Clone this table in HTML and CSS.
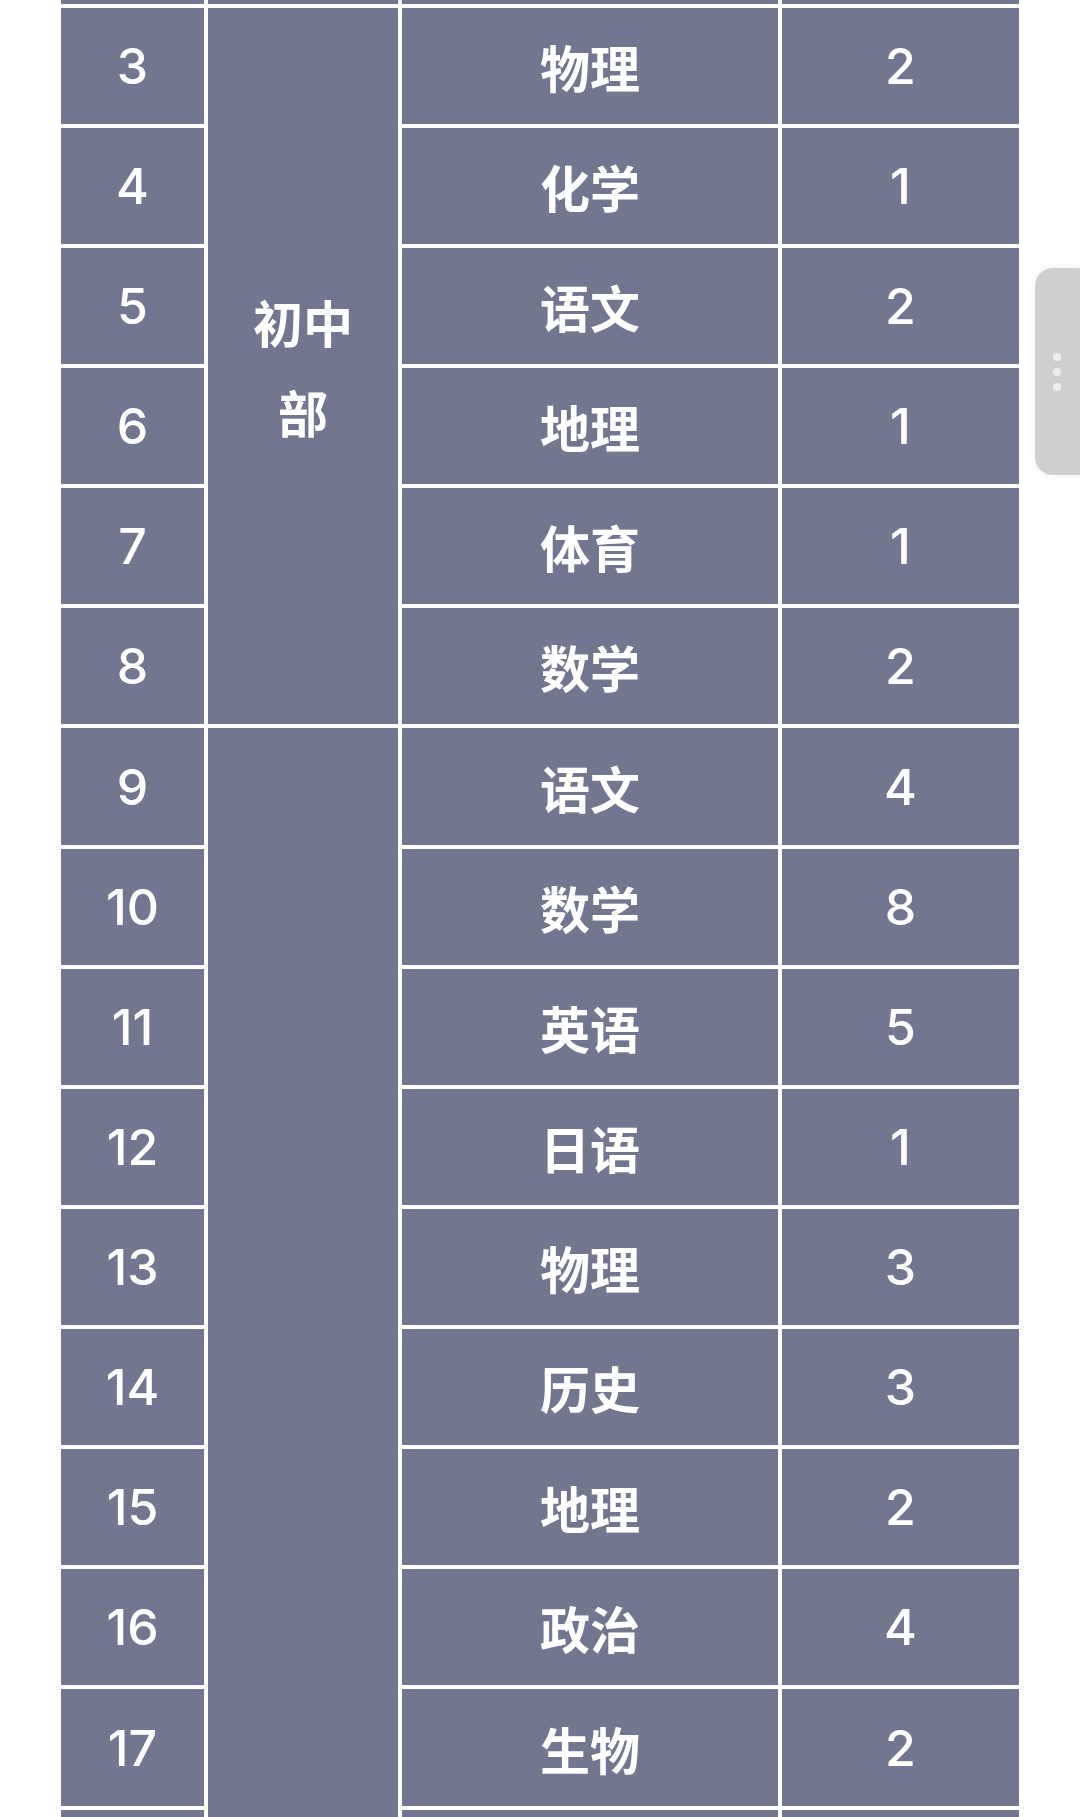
FILE: index.html
```html
<!DOCTYPE html>
<html lang="zh-CN">
<head>
<meta charset="utf-8">
<title>课程表</title>
<link rel="stylesheet" href="styles.css">
</head>
<body>
<div class="page">
  <div class="table">
    <div class="cell num"></div>
    <div class="cell grp"></div>
    <div class="cell sub"></div>
    <div class="cell cnt"></div>

    <div class="cell num">3</div>
    <div class="cell grp span6"><span class="grp-text">初中部</span></div>
    <div class="cell sub">物理</div>
    <div class="cell cnt">2</div>

    <div class="cell num">4</div>
    <div class="cell sub">化学</div>
    <div class="cell cnt">1</div>

    <div class="cell num">5</div>
    <div class="cell sub">语文</div>
    <div class="cell cnt">2</div>

    <div class="cell num">6</div>
    <div class="cell sub">地理</div>
    <div class="cell cnt">1</div>

    <div class="cell num">7</div>
    <div class="cell sub">体育</div>
    <div class="cell cnt">1</div>

    <div class="cell num">8</div>
    <div class="cell sub">数学</div>
    <div class="cell cnt">2</div>

    <div class="cell num">9</div>
    <div class="cell grp span10"></div>
    <div class="cell sub">语文</div>
    <div class="cell cnt">4</div>

    <div class="cell num">10</div>
    <div class="cell sub">数学</div>
    <div class="cell cnt">8</div>

    <div class="cell num">11</div>
    <div class="cell sub">英语</div>
    <div class="cell cnt">5</div>

    <div class="cell num">12</div>
    <div class="cell sub">日语</div>
    <div class="cell cnt">1</div>

    <div class="cell num">13</div>
    <div class="cell sub">物理</div>
    <div class="cell cnt">3</div>

    <div class="cell num">14</div>
    <div class="cell sub">历史</div>
    <div class="cell cnt">3</div>

    <div class="cell num">15</div>
    <div class="cell sub">地理</div>
    <div class="cell cnt">2</div>

    <div class="cell num">16</div>
    <div class="cell sub">政治</div>
    <div class="cell cnt">4</div>

    <div class="cell num">17</div>
    <div class="cell sub">生物</div>
    <div class="cell cnt">2</div>

    <div class="cell num"></div>
    <div class="cell sub"></div>
    <div class="cell cnt"></div>
  </div>
</div>
<div class="side-handle">
  <span class="dot"></span>
  <span class="dot"></span>
  <span class="dot"></span>
</div>
</body>
</html>
```

FILE: styles.css
```css
html, body {
  margin: 0;
  padding: 0;
  background: #ffffff;
  overflow: hidden;
  height: 1817px;
}

.page {
  padding-left: 61px;
}

.table {
  display: grid;
  grid-template-columns: 143px 190px 376px 237px;
  grid-auto-rows: 116.13px;
  column-gap: 4px;
  row-gap: 4px;
  margin-top: -112.4px;
  width: 962px;
}

.cell {
  background: #72778f;
  color: #ffffff;
  display: flex;
  align-items: center;
  justify-content: center;
  box-sizing: border-box;
}

.num, .cnt {
  font-family: "Inter", "Liberation Sans", sans-serif;
  font-weight: 500;
  font-size: 50px;
}

.sub {
  font-family: "Noto Sans CJK SC", sans-serif;
  font-weight: 700;
  font-size: 50px;
}

.grp {
  font-family: "Noto Sans CJK SC", sans-serif;
  font-weight: 700;
  font-size: 50px;
  line-height: 90px;
  padding: 0 30px;
  text-align: center;
}

.span6 {
  grid-row: span 6;
}

.span10 {
  grid-row: span 10;
}

.side-handle {
  position: fixed;
  left: 1035px;
  top: 268px;
  width: 60px;
  height: 207px;
  border-radius: 18px;
  background: #cfcfcf;
  box-shadow: 0 0 8px rgba(0, 0, 0, 0.06);
  display: flex;
  flex-direction: column;
  justify-content: center;
  align-items: flex-start;
  gap: 7px;
  padding-left: 18px;
  box-sizing: border-box;
}

.dot {
  width: 8px;
  height: 8px;
  border-radius: 50%;
  background: #ececec;
}
```
